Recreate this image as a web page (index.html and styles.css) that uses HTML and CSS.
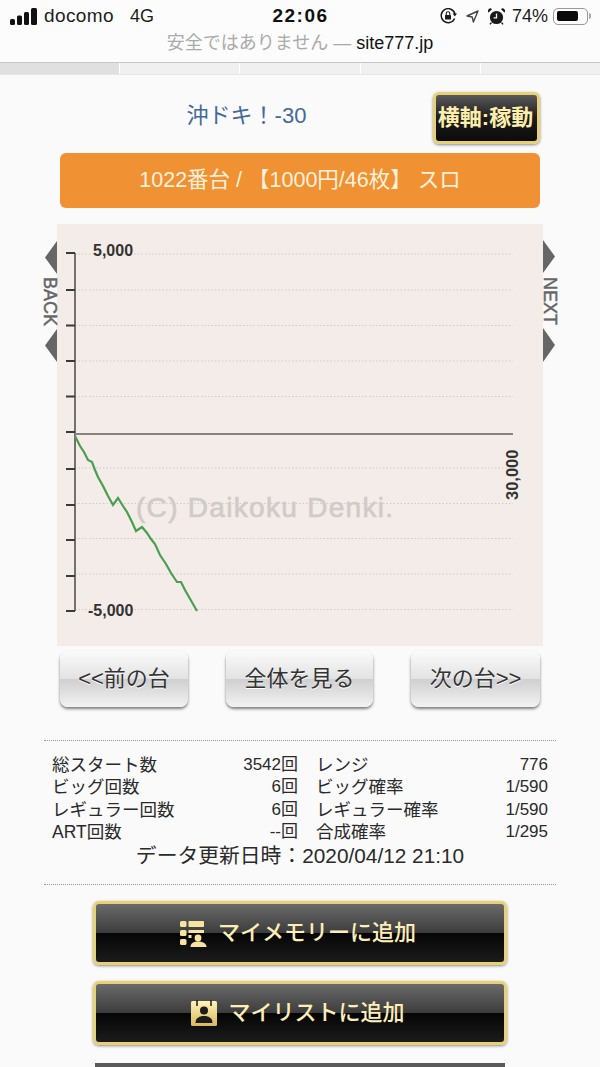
FILE: index.html
```html
<!DOCTYPE html>
<html lang="ja">

<head>
    <meta charset="UTF-8">
    <meta name="viewport" content="width=device-width, initial-scale=1.0">
    <title>沖ドキ！-30</title>
    <link rel="stylesheet" href="styles.css">
</head>

<body>
    <header class="browser">
        <div class="status">
            <div class="status-left">
                <svg class="signal" width="27" height="17" viewBox="0 0 27 17">
                    <rect x="0" y="11" width="5" height="6" rx="1.5"/>
                    <rect x="7" y="7.5" width="5" height="9.5" rx="1.5"/>
                    <rect x="14" y="4" width="5" height="13" rx="1.5"/>
                    <rect x="21" y="0" width="6" height="17" rx="1.5"/>
                </svg>
                <span class="carrier">docomo</span>
                <span class="network">4G</span>
            </div>
            <div class="clock">22:06</div>
            <div class="status-right">
                <svg class="ico-rotate" width="17" height="16" viewBox="0 0 17 16">
                    <path d="M14.6 10.5A7 7 0 1 1 15 6" fill="none" stroke="#1a1a1a" stroke-width="1.5"/>
                    <path d="M12.6 5.4h4.4l-2.2 3z" fill="#1a1a1a"/>
                    <rect x="5" y="7" width="6" height="4.6" rx=".6" fill="#1a1a1a"/>
                    <path d="M6.2 7V5.6a1.8 1.8 0 0 1 3.6 0V7" fill="none" stroke="#1a1a1a" stroke-width="1.1"/>
                </svg>
                <svg class="ico-loc" width="13" height="13" viewBox="0 0 13 13">
                    <path d="M12 1 1 6l5.2 1L7.4 12z" fill="none" stroke="#444" stroke-width="1.4" stroke-linejoin="round"/>
                </svg>
                <svg class="ico-alarm" width="17" height="17" viewBox="0 0 17 17">
                    <circle cx="8.5" cy="9.5" r="6.6" fill="#1a1a1a"/>
                    <path d="M.6 4.6 4 1.2A2.4 2.4 0 0 0 .6 4.6zM16.4 4.6 13 1.2a2.4 2.4 0 0 1 3.4 3.4z" fill="#1a1a1a"/>
                    <path d="M3.4 14.6 2 16.4M13.6 14.6 15 16.4" stroke="#1a1a1a" stroke-width="1.5"/>
                    <path d="M8.5 5.4v4.4H5.6" fill="none" stroke="#fafafa" stroke-width="1.3"/>
                </svg>
                <span class="percent">74%</span>
                <div class="battery"><div class="battery-fill"></div></div>
                <div class="battery-nub"></div>
            </div>
        </div>
        <div class="url"><span class="insecure">安全ではありません —</span> site777.jp</div>
        <div class="tabs">
            <div class="tab tab-active"></div><div class="tab"></div><div class="tab"></div><div class="tab"></div><div class="tab"></div>
        </div>
    </header>

    <main>
        <section class="head">
            <div class="title-row">
                <h1 class="title">沖ドキ！-30</h1>
                <a class="axis-btn" href="#">横軸:稼動</a>
            </div>
            <div class="machine">1022番台 / 【1000円/46枚】 スロ</div>
        </section>

        <svg class="graph" width="600" height="422" viewBox="0 224 600 422">
            <rect x="57" y="224" width="486" height="422" fill="#f4ece8"/>

            <path class="nav-arrow" d="M57 241v33l-12-16.500zM57 329v33l-12-16.500zM543 240v33l12-16.500zM543 328v34l12-17z"/>
            <text class="nav-label" transform="translate(44 277) rotate(90)">BACK</text>
            <text class="nav-label" transform="translate(544 277) rotate(90)">NEXT</text>

            <path class="grid" d="M75 254H513M75 290H513M75 325.500H513M75 361H513M75 396.500H513M75 468H513M75 503.500H513M75 538.500H513M75 574H513M75 609.500H513"/>

            <text class="watermark" x="136" y="517">(C) Daikoku Denki.</text>

            <path class="axis" d="M75 253V611"/>
            <path class="ticks" d="M66 253H75M66 290H75M66 325.500H75M66 361H75M66 396.500H75M66 432H75M66 469H75M66 505H75M66 540H75M66 576H75M66 611H75"/>
            <path class="zero" d="M75 434H513"/>

            <path class="data" d="M75 436 80 446 84 452 88 460 92 462 95 470 98 477 103 486 108 496 113 505 118 498 123 506 127 512 132 522 136 531 142 527 147 533 151 539 155 544 160 555 166 564 171 573 177 582 181 582 185 590 189 597 193 604 197 611"/>

            <text class="scale" x="93" y="256">5,000</text>
            <text class="scale" x="88" y="615.500">-5,000</text>
            <text class="scale scale-x" transform="translate(518 500) rotate(-90)">30,000</text>
        </svg>

        <nav class="pager">
            <a class="page-btn prev" href="#">&lt;&lt;前の台</a>
            <a class="page-btn all" href="#">全体を見る</a>
            <a class="page-btn next" href="#">次の台&gt;&gt;</a>
        </nav>

        <section class="data-box">
            <div class="stats">
                <div class="stat"><span>総スタート数</span><span class="val">3542回</span></div>
                <div class="stat"><span>レンジ</span><span class="val">776</span></div>
                <div class="stat"><span>ビッグ回数</span><span class="val">6回</span></div>
                <div class="stat"><span>ビッグ確率</span><span class="val">1/590</span></div>
                <div class="stat"><span>レギュラー回数</span><span class="val">6回</span></div>
                <div class="stat"><span>レギュラー確率</span><span class="val">1/590</span></div>
                <div class="stat"><span>ART回数</span><span class="val">--回</span></div>
                <div class="stat"><span>合成確率</span><span class="val">1/295</span></div>
            </div>
            <p class="updated">データ更新日時：2020/04/12 21:10</p>
        </section>

        <section class="actions">
            <a class="gold-btn" href="#">
                <svg width="27" height="27" viewBox="0 0 27 27">
                    <g fill="#f6e3a0">
                        <rect x="0" y="1" width="6.500" height="6" rx="1.500"/>
                        <rect x="0" y="10" width="6.500" height="6" rx="1.500"/>
                        <rect x="0" y="19" width="6.500" height="6" rx="1.500"/>
                        <rect x="8.500" y="1" width="15.500" height="6" rx=".8"/>
                        <rect x="8.500" y="10" width="15.500" height="3"/>
                        <rect x="8.500" y="15" width="3" height="3"/>
                        <circle cx="18" cy="18" r="3.400"/>
                        <path d="M10.500 27c0-4 3.400-5.500 7.500-5.500s8.500 1.500 8.500 5.500z"/>
                    </g>
                </svg>
                <span>マイメモリーに追加</span>
            </a>
            <a class="gold-btn" href="#">
                <svg width="26" height="26" viewBox="0 0 26 26">
                    <defs>
                        <linearGradient id="cal" x1="0" y1="0" x2="0" y2="1">
                            <stop offset="0" stop-color="#fff3b8"/>
                            <stop offset="1" stop-color="#d9b95c"/>
                        </linearGradient>
                    </defs>
                    <rect x="0" y="1" width="26" height="25" rx="1.500" fill="url(#cal)"/>
                    <path d="M6 0v6M20 0v6" stroke="#1c1c1c" stroke-width="1.500"/>
                    <circle cx="13" cy="10.500" r="4" fill="#1c1c1c"/>
                    <path d="M4.500 23c0-5 3.800-7 8.500-7s8.500 2 8.500 7z" fill="#1c1c1c"/>
                </svg>
                <span>マイリストに追加</span>
            </a>
            <a class="plain-btn" href="#"></a>
        </section>
    </main>
</body>

</html>
```

FILE: styles.css
```css
html, body {
    height: 100%;
}

body {
    margin: 0;
    padding: 0;
    overflow: hidden;
    background: #fafafa;
    color: #2a2a2a;
    font-family: "Liberation Sans", "Noto Sans CJK JP", sans-serif;
}

a {
    text-decoration: none;
    color: inherit;
}

/* browser chrome */
.browser {
    background: #fcfcfc;
}

.status {
    display: grid;
    grid-template-columns: 1fr auto 1fr;
    align-items: center;
    height: 32px;
    padding: 0 9px 0 10px;
    font-size: 18px;
    color: #1c1c1c;
}

.status-left, .status-right {
    display: flex;
    align-items: center;
}

.status-right {
    justify-content: flex-end;
}

.signal {
    fill: #111;
}

.carrier {
    margin-left: 7px;
    font-size: 19px;
    letter-spacing: .4px;
}

.network {
    margin-left: 16px;
}

.clock {
    font-weight: bold;
    font-size: 19px;
    letter-spacing: 1.500px;
    color: #111;
}

.status-right svg {
    margin-right: 9px;
}

.status-right .ico-alarm {
    margin-right: 7px;
}

.percent {
    margin-right: 5px;
}

.battery {
    box-sizing: border-box;
    width: 35px;
    height: 17px;
    padding: 2.500px 3px;
    border: 1px solid #999;
    border-radius: 5px;
}

.battery-fill {
    width: 21px;
    height: 10px;
    background: #0a0a0a;
    border-radius: 2px;
}

.battery-nub {
    width: 2px;
    height: 6px;
    margin-left: 1px;
    background: #aaa;
    border-radius: 0 2px 2px 0;
}

.url {
    height: 30px;
    line-height: 23px;
    text-align: center;
    font-size: 18px;
    color: #111;
}

.insecure {
    color: #aaa;
}

.tabs {
    display: flex;
    height: 11px;
    border-top: 1px solid #c6c6c6;
    border-bottom: 1px solid #e6e6e6;
}

.tab {
    flex: 1;
    background: #f0f0f0;
    border-left: 1px solid #fff;
}

.tab-active {
    background: #e0e0e0;
    border-left: 0;
}

/* title */
.head {
    padding: 17px 60px 0;
}

.title-row {
    display: flex;
    align-items: center;
}

.title {
    flex: 1;
    margin: 0;
    padding-bottom: 10px;
    text-align: center;
    font-size: 22px;
    font-weight: normal;
    color: #43699a;
}

.axis-btn {
    box-sizing: border-box;
    width: 107px;
    height: 52px;
    padding-right: 2px;
    line-height: 46px;
    text-align: center;
    font-size: 22px;
    font-weight: bold;
    white-space: nowrap;
    color: #fdeeac;
    background: linear-gradient(#5a5a5a, #1c1c1c 50%, #0c0c0c);
    border: 3px solid #e8d077;
    border-radius: 6px;
    box-shadow: 0 1px 3px rgba(0, 0, 0, .45);
}

.machine {
    margin-top: 9px;
    height: 55px;
    line-height: 54px;
    text-align: center;
    font-size: 21.500px;
    color: #fff1dc;
    background: #f09233;
    border-radius: 6px;
}

/* graph */
.graph {
    display: block;
    margin-top: 16px;
}

.nav-arrow {
    fill: #666;
}

.nav-label {
    font-size: 18px;
    fill: #666;
    stroke: #666;
    stroke-width: .5;
}

.grid {
    fill: none;
    stroke: #d2cac6;
    stroke-width: 1;
    stroke-dasharray: 1.500 2;
}

.watermark {
    font-size: 28px;
    letter-spacing: 1.300px;
    fill: #cfcbc8;
    stroke: #cfcbc8;
    stroke-width: .6;
}

.axis {
    stroke: #77716d;
    stroke-width: 2;
}

.ticks {
    stroke: #3a3a3a;
    stroke-width: 2;
}

.zero {
    stroke: #8a827c;
    stroke-width: 2;
}

.data {
    fill: none;
    stroke: #4a9e50;
    stroke-width: 2.200;
}

.scale {
    font-size: 16px;
    font-weight: bold;
    fill: #333;
}

.scale-x {
    font-size: 16.500px;
}

/* prev / next */
.pager {
    display: flex;
    justify-content: space-between;
    margin-top: 5px;
    padding: 0 60px;
}

.page-btn {
    box-sizing: border-box;
    height: 56px;
    line-height: 56px;
    text-align: center;
    font-size: 22px;
    color: #333;
    background: linear-gradient(#fbfbfb, #e2e2e2 50%, #cfcfcf 50%, #f2f2f2);
    border-radius: 8px;
    box-shadow: 0 2px 3px rgba(0, 0, 0, .5);
    text-shadow: 0 1px 0 #fff;
}

.prev {
    width: 128px;
}

.next {
    width: 129px;
}

.all {
    width: 147px;
}

/* numbers */
.data-box {
    margin: 33px 44px 0;
    padding: 12.500px 8px 15.500px;
    border-top: 1px dotted #999;
    border-bottom: 1px dotted #999;
}

.stats {
    display: grid;
    grid-template-columns: 246px 232px;
    column-gap: 18px;
    font-size: 17.500px;
    line-height: 22.500px;
}

.stat {
    display: flex;
    justify-content: space-between;
}

.val {
    font-size: 17px;
}

.updated {
    margin: -1px 0 0;
    text-align: center;
    font-size: 20.800px;
    line-height: 26px;
}

/* buttons */
.actions {
    display: flex;
    flex-direction: column;
    align-items: center;
    gap: 16px;
    margin-top: 16px;
}

.gold-btn {
    box-sizing: border-box;
    display: flex;
    justify-content: center;
    align-items: center;
    gap: 11px;
    width: 414px;
    height: 64px;
    padding: 0 4px 0 0;
    font-size: 22px;
    font-weight: 500;
    color: #fdeeb8;
    background: linear-gradient(#6a6a6a, #3c3c3c 50%, #050505 50%, #1c1c1c);
    border: 3px solid #e8d077;
    border-radius: 6px;
    box-shadow: 0 1px 3px rgba(0, 0, 0, .45);
}

.gold-btn span {
    margin-bottom: 6px;
}

.plain-btn {
    display: block;
    width: 410px;
    height: 4px;
    margin-top: 2px;
    background: #5a5a5a;
}
```
